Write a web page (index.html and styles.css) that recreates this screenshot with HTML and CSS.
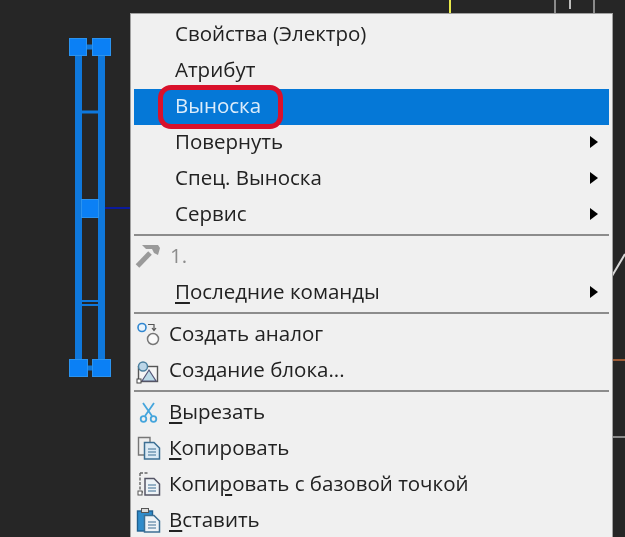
FILE: index.html
```html
<!DOCTYPE html>
<html lang="ru">
<head>
<meta charset="utf-8">
<title>Выноска</title>
<link rel="stylesheet" href="styles.css">
</head>
<body>
<div class="canvas">
  <svg class="drawing" width="625" height="537" viewBox="0 0 625 537">
    <line x1="450" y1="0" x2="450" y2="14" stroke="#e8e84a" stroke-width="2"/>
    <line x1="555" y1="0" x2="555" y2="14" stroke="#8a8a8a" stroke-width="2"/>
    <line x1="570" y1="0" x2="570" y2="9" stroke="#bdbdbd" stroke-width="2"/>
    <line x1="594" y1="0" x2="594" y2="14" stroke="#8a8a8a" stroke-width="2"/>
    <line x1="612" y1="276" x2="625" y2="254" stroke="#d8d8d8" stroke-width="2"/>
    <line x1="613" y1="360" x2="625" y2="360" stroke="#9c5a35" stroke-width="2"/>
    <line x1="613" y1="437" x2="625" y2="437" stroke="#8a8a8a" stroke-width="2"/>
    <line x1="99" y1="208" x2="131" y2="208" stroke="#0a1a9c" stroke-width="2"/>
    <g stroke="#0f78dc" fill="none">
      <line x1="78.500" y1="50" x2="78.500" y2="365" stroke-width="7"/>
      <line x1="101.500" y1="50" x2="101.500" y2="365" stroke-width="7"/>
      <line x1="80" y1="47" x2="100" y2="47" stroke-width="5"/>
      <line x1="80" y1="368" x2="100" y2="368" stroke-width="5"/>
      <line x1="80" y1="112" x2="100" y2="112" stroke-width="3"/>
      <line x1="80" y1="301" x2="100" y2="301" stroke-width="2"/>
      <line x1="80" y1="305" x2="100" y2="305" stroke-width="2"/>
    </g>
    <g fill="#0b80f5" stroke="#2b93ef" stroke-width="1">
      <rect x="69.500" y="38.500" width="17" height="17"/>
      <rect x="92.500" y="38.500" width="18" height="17"/>
      <rect x="81.500" y="199.500" width="17" height="18"/>
      <rect x="69.500" y="359.500" width="18" height="17"/>
      <rect x="92.500" y="359.500" width="18" height="17"/>
    </g>
  </svg>

  <div class="menu">
    <div class="row"><span class="slot"></span><span class="label">Свойства (Электро)</span></div>
    <div class="row"><span class="slot"></span><span class="label">Атрибут</span></div>
    <div class="row row-active"><span class="slot"></span><span class="label">Выноска</span><span class="mark"></span></div>
    <div class="row"><span class="slot"></span><span class="label">Повернуть</span><span class="arrow"></span></div>
    <div class="row"><span class="slot"></span><span class="label">Спец. Выноска</span><span class="arrow"></span></div>
    <div class="row"><span class="slot"></span><span class="label">Сервис</span><span class="arrow"></span></div>
    <div class="sep"></div>
    <div class="row row-disabled">
      <span class="slot">
        <svg class="icon" width="28" height="28" viewBox="0 0 28 28"><path d="M3.500 24 L16 11" stroke="#9a9a9a" stroke-width="5" fill="none"/><path d="M8 3 H24 L26 6 L24 13 L20 11 L18 7 H12 Z" fill="#9a9a9a"/></svg>
      </span>
      <span class="label">1.</span>
    </div>
    <div class="row"><span class="slot"></span><span class="label"><u>П</u>оследние команды</span><span class="arrow"></span></div>
    <div class="sep"></div>
    <div class="row row-tight">
      <span class="slot">
        <svg class="icon" width="28" height="28" viewBox="0 0 28 28"><circle cx="8" cy="7.500" r="4" fill="#eaf4fc" stroke="#2f86d0" stroke-width="1.600"/><circle cx="19" cy="19" r="5.500" fill="#fafafa" stroke="#777" stroke-width="1.500"/><path d="M14 4.500 H20 V10 M18 8 L20 10.500 L22 8" fill="none" stroke="#555" stroke-width="1.200"/></svg>
      </span>
      <span class="label">Создать аналог</span>
    </div>
    <div class="row row-tight">
      <span class="slot">
        <svg class="icon" width="28" height="28" viewBox="0 0 28 28"><rect x="4.500" y="10.500" width="19" height="15" fill="#f5f5f5" stroke="#555" stroke-width="1.400"/><circle cx="9" cy="10.500" r="4.500" fill="#bcd6e8" stroke="#4a7f9e" stroke-width="1.400"/><path d="M8 25 L15 14 L22 25 Z" fill="#bcdbe8" stroke="#557" stroke-width="1.200"/><rect x="3" y="23" width="4" height="4" fill="#fff" stroke="#444"/></svg>
      </span>
      <span class="label">Создание блока...</span>
    </div>
    <div class="sep"></div>
    <div class="row row-tight">
      <span class="slot">
        <svg class="icon" width="28" height="28" viewBox="0 0 28 28"><path d="M9 5 L18 18 M20 5 L11 18" stroke="#45a5dc" stroke-width="1.800" fill="none"/><circle cx="9.500" cy="21" r="2.800" fill="none" stroke="#45a5dc" stroke-width="1.800"/><circle cx="19.500" cy="21" r="2.800" fill="none" stroke="#45a5dc" stroke-width="1.800"/></svg>
      </span>
      <span class="label"><u>В</u>ырезать</span>
    </div>
    <div class="row row-tight">
      <span class="slot">
        <svg class="icon" width="28" height="28" viewBox="0 0 28 28"><path d="M4.500 3.500 H16 V21 H4.500 Z" fill="#eee" stroke="#777" stroke-width="1.400"/><path d="M10.500 8.500 H20 L25.500 14 V25 H10.500 Z" fill="#dbeaf5" stroke="#3c6f94" stroke-width="1.500"/><path d="M14 15 H22 M14 18 H22 M14 21 H22" stroke="#3c6f94" stroke-width="1.200"/></svg>
      </span>
      <span class="label"><u>К</u>опировать</span>
    </div>
    <div class="row row-tight">
      <span class="slot">
        <svg class="icon" width="28" height="28" viewBox="0 0 28 28"><path d="M6 3 H15 M6 3 V21 M6 22 H10" fill="none" stroke="#666" stroke-width="1.400" stroke-dasharray="3 1.500"/><rect x="4" y="21" width="4" height="4" fill="#fff" stroke="#555"/><path d="M11 8.500 H20 L25.500 14 V25 H11 Z" fill="#eef3f7" stroke="#556" stroke-width="1.500"/><path d="M14 15 H22 M14 18 H22 M14 21 H22" stroke="#3c6f94" stroke-width="1.200"/></svg>
      </span>
      <span class="label">Копи<u>р</u>овать с базовой точкой</span>
    </div>
    <div class="row row-tight">
      <span class="slot">
        <svg class="icon" width="28" height="28" viewBox="0 0 28 28"><rect x="3.500" y="5" width="15" height="20" fill="#2f8ccb" stroke="#205f8f" stroke-width="1.400"/><rect x="7.500" y="2.500" width="7" height="4" fill="#ddd" stroke="#555"/><path d="M10.500 9.500 H20 L25.500 15 V26 H10.500 Z" fill="#eef3f7" stroke="#3c6f94" stroke-width="1.500"/><path d="M14 16 H22 M14 19 H22 M14 22 H22" stroke="#3c6f94" stroke-width="1.200"/></svg>
      </span>
      <span class="label"><u>В</u>ставить</span>
    </div>
  </div>
</div>
</body>
</html>
```

FILE: styles.css
```css
html, body {
  margin: 0;
  padding: 0;
  background: #262626;
}

.canvas {
  position: relative;
  width: 625px;
  height: 537px;
  overflow: hidden;
  background: #262626;
  filter: blur(0.4px);
}

.drawing {
  position: absolute;
  left: 0;
  top: 0;
}

.menu {
  position: absolute;
  left: 130px;
  top: 13px;
  width: 483px;
  box-sizing: border-box;
  padding: 2px 3px 0 3px;
  background: #f0f0f0;
  border-left: 1px solid #a0a0a0;
  border-top: 1px solid #a0a0a0;
  border-right: 1px solid #a0a0a0;
  font-family: "Open Sans", "Noto Sans", sans-serif;
  font-size: 20.5px;
  color: #222;
}

.row {
  position: relative;
  display: flex;
  align-items: center;
  height: 36px;
  white-space: nowrap;
}

.label {
  padding-bottom: 3px;
}

.row u {
  text-underline-offset: 3px;
  text-decoration-thickness: 2px;
}

.slot {
  flex: none;
  display: flex;
  align-items: center;
  width: 41px;
  height: 100%;
}

.row-tight .slot {
  width: 35px;
}

.row-disabled .slot {
  width: 36px;
}

.icon {
  display: block;
}

.row-active {
  background: linear-gradient(#0578d7, #0578d7) 0 1px no-repeat;
  box-shadow: 0 1px 0 #0578d7;
  color: #dcecfa;
}

.row-disabled {
  color: #8c8c8c;
}

.mark {
  position: absolute;
  left: 24px;
  top: -3px;
  width: 125px;
  height: 44px;
  box-sizing: border-box;
  border: 5px solid #d9112b;
  border-radius: 13px;
}

.arrow {
  margin-left: auto;
  margin-right: 11px;
  width: 0;
  height: 0;
  border-left: 8px solid #000;
  border-top: 6px solid transparent;
  border-bottom: 6px solid transparent;
}

.sep {
  height: 2px;
  margin: 2px 0;
  background: #8c8c8c;
}
```
